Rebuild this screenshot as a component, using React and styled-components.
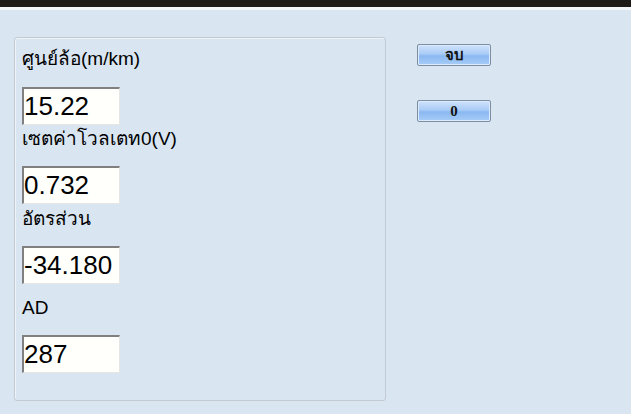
import React from "react";
import styled, { createGlobalStyle } from "styled-components";

const GlobalStyle = createGlobalStyle`
  html, body {
    margin: 0;
    padding: 0;
    background: #d9e5f1;
  }
  body {
    font-family: "Liberation Sans", "Noto Sans", "DejaVu Sans", sans-serif;
  }
`;

const Page = styled.div`
  width: 631px;
  height: 414px;
  overflow: hidden;
  background: #d9e5f1;
`;

const TopBar = styled.div`
  height: 7px;
  background: #1b1917;
  border-bottom: 3px solid #eef4f8;
`;

const Body = styled.div`
  display: flex;
  align-items: flex-start;
  padding: 27px 0 0 14px;
`;

const Panel = styled.div`
  width: 372px;
  height: 364px;
  box-sizing: border-box;
  border: 1px solid #c2cbd3;
  box-shadow: inset 1px 1px 0 #eef3f8;
  border-radius: 3px;
  padding: 10px 0 0 7px;
`;

const Label = styled.div`
  font-size: 19px;
  line-height: 22px;
  color: #000;
  height: ${(p) => p.$h}px;
  padding-top: ${(p) => p.$pt || 0}px;
  box-sizing: border-box;
`;

const Field = styled.div`
  width: 98px;
  height: 38px;
  box-sizing: border-box;
  background: #fffffc;
  border-top: 2px solid #808080;
  border-left: 2px solid #808080;
  border-right: 1px solid #e6e6e6;
  border-bottom: 1px solid #e6e6e6;
  font-size: 26px;
  line-height: 34px;
  padding-left: 0;
  color: #000;
  margin-bottom: ${(p) => p.$mb}px;
`;

const Side = styled.div`
  display: flex;
  flex-direction: column;
  gap: 34px;
  margin-left: 31px;
  padding-top: 7px;
`;

const Button = styled.div`
  width: 74px;
  height: 22px;
  box-sizing: border-box;
  border: 1px solid #7d8ea3;
  border-radius: 2px;
  background: linear-gradient(#cfe3fb 0%, #a9cbf6 45%, #8ab8f2 55%, #a8cdf7 100%);
  box-shadow: inset 0 0 0 1px #dbeafc;
  font-family: "Liberation Serif", serif;
  font-weight: bold;
  font-size: 15px;
  line-height: 20px;
  text-align: center;
  color: #111;
`;

export default function App() {
  return (
    <Page>
      <GlobalStyle />
      <TopBar />
      <Body>
        <Panel>
          <Label $h={39}>ศูนย์ล้อ(m/km)</Label>
          <Field $mb={3}>15.22</Field>
          <Label $h={38}>เซตค่าโวลเตท0(V)</Label>
          <Field $mb={4}>0.732</Field>
          <Label $h={38}>อัตรส่วน</Label>
          <Field $mb={11}>-34.180</Field>
          <Label $h={40} $pt={2}>AD</Label>
          <Field $mb={0}>287</Field>
        </Panel>
        <Side>
          <Button>จบ</Button>
          <Button>0</Button>
        </Side>
      </Body>
    </Page>
  );
}
